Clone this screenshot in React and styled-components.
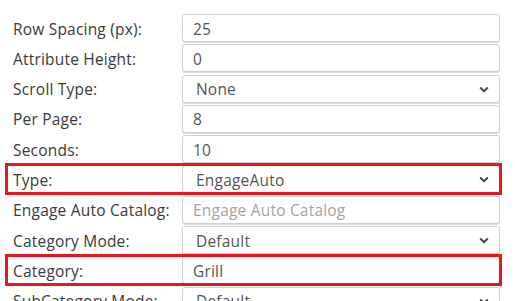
import React from 'react';
import styled, { createGlobalStyle } from 'styled-components';

const GlobalStyle = createGlobalStyle`
  body {
    margin: 0;
    background: #fff;
    font-family: "Open Sans", "Noto Sans", sans-serif;
  }
`;

const Form = styled.div`
  display: flex;
  flex-direction: column;
  gap: 2.3px;
  padding: 14px 0 0 13px;
  width: 488px;
`;

const Row = styled.div`
  position: relative;
  display: grid;
  grid-template-columns: 169px 318px;
  align-items: center;
  height: 28px;

  ${(p) =>
    p.highlight &&
    `
    &::after {
      content: '';
      position: absolute;
      left: -8px;
      right: -1px;
      top: -2px;
      bottom: -2px;
      border: 3px solid #e8161f;
      pointer-events: none;
    }
  `}
`;

const Label = styled.label`
  font-size: 15.5px;
  letter-spacing: 0.2px;
  color: #3a3a3a;
  white-space: nowrap;
  padding-top: 1px;
`;

const TextInput = styled.input`
  box-sizing: border-box;
  height: 28px;
  width: 100%;
  padding: 1px 10px 0;
  border: 1px solid #d0d0d0;
  border-radius: 3px;
  box-shadow: 0 1px 0 #dcdcdc;
  font-family: inherit;
  font-size: 15.5px;
  letter-spacing: 0.2px;
  color: #555;
  background: #fff;
  outline: none;

  &::placeholder {
    color: #a3a3a3;
  }
`;

const SelectBox = styled.div`
  box-sizing: border-box;
  height: 28px;
  display: flex;
  align-items: center;
  justify-content: space-between;
  padding: 1px 10px 0 13px;
  border: 1px solid #d0d0d0;
  border-radius: 3px;
  box-shadow: 0 1px 0 #dcdcdc;
  font-size: 15.5px;
  letter-spacing: 0.2px;
  color: #555;
  background: #fff;
`;

const Chevron = () => (
  <svg width="10" height="7" viewBox="0 0 10 7">
    <path d="M1.2 1.5 L5 5.2 L8.8 1.5" fill="none" stroke="#444" strokeWidth="2" />
  </svg>
);

const fields = [
  { label: 'Row Spacing (px):', kind: 'input', value: '25' },
  { label: 'Attribute Height:', kind: 'input', value: '0' },
  { label: 'Scroll Type:', kind: 'select', value: 'None' },
  { label: 'Per Page:', kind: 'input', value: '8' },
  { label: 'Seconds:', kind: 'input', value: '10' },
  { label: 'Type:', kind: 'select', value: 'EngageAuto', highlight: true },
  { label: 'Engage Auto Catalog:', kind: 'input', placeholder: 'Engage Auto Catalog' },
  { label: 'Category Mode:', kind: 'select', value: 'Default' },
  { label: 'Category:', kind: 'input', value: 'Grill', highlight: true },
  { label: 'SubCategory Mode:', kind: 'select', value: 'Default' },
];

export default function App() {
  return (
    <>
      <GlobalStyle />
      <Form>
        {fields.map((f) => (
          <Row key={f.label} highlight={f.highlight}>
            <Label>{f.label}</Label>
            {f.kind === 'select' ? (
              <SelectBox>
                <span>{f.value}</span>
                <Chevron />
              </SelectBox>
            ) : (
              <TextInput defaultValue={f.value} placeholder={f.placeholder} readOnly />
            )}
          </Row>
        ))}
      </Form>
    </>
  );
}
